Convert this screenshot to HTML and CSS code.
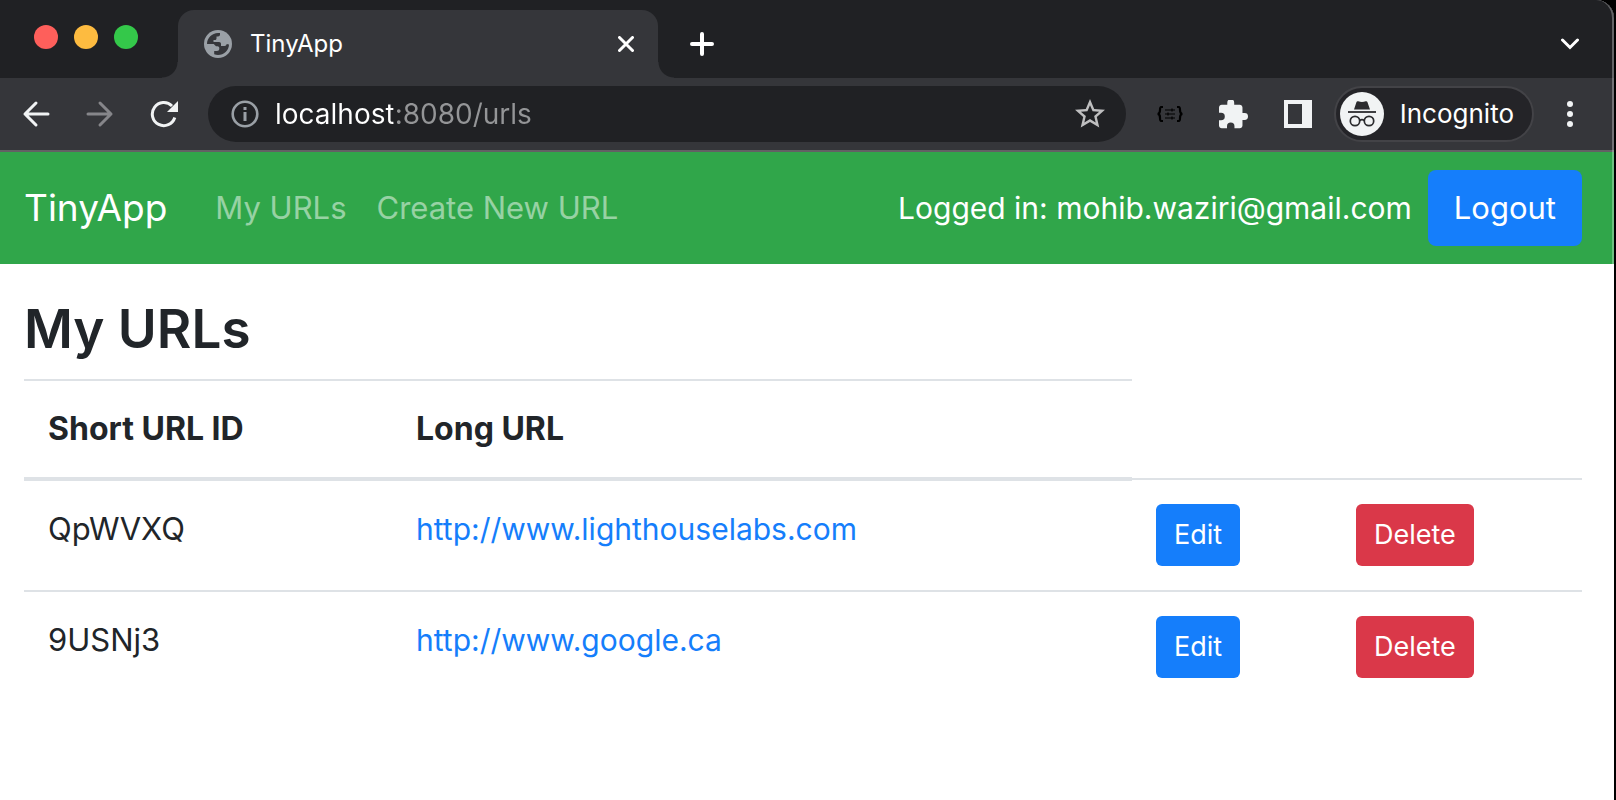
FILE: index.html
```html
<!DOCTYPE html>
<html lang="en">
<head>
<meta charset="utf-8">
<title>TinyApp</title>
<link rel="stylesheet" href="styles.css">
</head>
<body>
<div class="window">
  <header class="chrome">
    <div class="tabstrip">
      <div class="lights">
        <button class="light light-close" aria-label="Close window"></button>
        <button class="light light-min" aria-label="Minimize window"></button>
        <button class="light light-max" aria-label="Maximize window"></button>
      </div>
      <div class="tab">
        <svg class="globe" width="28" height="28" viewBox="0 0 28 28" aria-hidden="true"><circle cx="14" cy="14" r="14" fill="#9aa0a6"/><path fill="#35363a" d="M3 14C3 8 8 3 14 3h2v1.500c0 1.200-.800 2-2 2h-1.500v2c0 .900-.600 1.500-1.500 1.500H9.500v2H15c1.300 0 2 .700 2 2v2h3.500c1.300 0 2-1 2.200-2l2.300.500C24.800 20.500 20 25 14 25c-1.300 0-2.500-.200-3.800-.700V21H13c1.300 0 2.300-1 2.300-2.300v-.700c0-1-.800-1.700-1.800-1.700H12L9.700 14z"/></svg>
        <span class="tab-title">TinyApp</span>
        <button class="icon-btn" aria-label="Close tab"><svg width="16" height="16" viewBox="0 0 16 16"><path d="M1.500 1.500l13 13M14.500 1.500l-13 13" stroke="#fff" stroke-width="3" stroke-linecap="round"/></svg></button>
      </div>
      <button class="icon-btn new-tab" aria-label="New tab"><svg width="24" height="24" viewBox="0 0 24 24"><path d="M12 2v20M2 12h20" stroke="#fff" stroke-width="4" stroke-linecap="round"/></svg></button>
      <button class="icon-btn tab-search" aria-label="Search tabs"><svg width="20" height="12" viewBox="0 0 20 12"><path d="M2.500 2L10 9.500 17.500 2" fill="none" stroke="#fff" stroke-width="3" stroke-linecap="round"/></svg></button>
    </div>
    <div class="toolbar">
      <div class="nav-buttons">
        <button class="icon-btn" aria-label="Back"><svg width="28" height="28" viewBox="0 0 28 28"><path d="M14 3L3 14l11 11M3 14h23" fill="none" stroke="#f1f3f4" stroke-width="3" stroke-linecap="round" stroke-linejoin="round"/></svg></button>
        <button class="icon-btn" aria-label="Forward"><svg width="28" height="28" viewBox="0 0 28 28"><path d="M14 3l11 11-11 11M25 14H2" fill="none" stroke="#86868a" stroke-width="3" stroke-linecap="round" stroke-linejoin="round"/></svg></button>
        <button class="icon-btn" aria-label="Reload"><svg width="28" height="28" viewBox="0 0 28 28"><path d="M24.800 17.500A11.500 11.500 0 1 1 22 6" fill="none" stroke="#f1f3f4" stroke-width="3"/><path d="M28 1v11H17z" fill="#f1f3f4"/></svg></button>
      </div>
      <div class="omnibox">
        <svg class="info" width="28" height="28" viewBox="0 0 28 28" aria-hidden="true"><circle cx="14" cy="14" r="12.300" fill="none" stroke="#9aa0a6" stroke-width="2.600"/><path d="M12.500 12h3v9h-3zM12.500 7h3v3h-3z" fill="#9aa0a6"/></svg>
        <input class="address" type="text" aria-label="Address" value="localhost:8080/urls">
        <button class="icon-btn" aria-label="Bookmark this page"><svg width="30" height="30" viewBox="2 2 20 20"><path fill="#bfbfc0" d="M22 9.240l-7.190-.620L12 2 9.190 8.630 2 9.240l5.460 4.730L5.820 21 12 17.270 18.180 21l-1.630-7.030zM12 15.400l-3.760 2.270 1-4.280-3.320-2.880 4.380-.380L12 6.100l1.710 4.040 4.380.380-3.320 2.880 1 4.280z"/></svg></button>
      </div>
      <div class="extensions">
        <button class="icon-btn" aria-label="JSON viewer"><svg width="26" height="16" viewBox="0 0 26 16"><path d="M6 1H4.500C3 1 3 2 3 4s0 4-2.500 4C3 8 3 10 3 12s0 3 1.500 3H6M20 1h1.500C23 1 23 2 23 4s0 4 2.500 4C23 8 23 10 23 12s0 3-1.500 3H20" fill="none" stroke="#000" stroke-width="2.200"/><path d="M8 4h10M8 8h10M8 12h10M15 2.500v3M11 6.500v3M15 10.500v3" stroke="#000" stroke-width="1.200"/></svg></button>
        <button class="icon-btn" aria-label="Extensions"><svg width="29" height="29" viewBox="2 1.500 21 21"><path fill="#f1f3f4" d="M20.500 11H19V7c0-1.100-.900-2-2-2h-4V3.500a2.500 2.500 0 0 0-5 0V5H4c-1.100 0-1.990.900-1.990 2v3.800H3.500a2.700 2.700 0 0 1 0 5.400H2V20c0 1.100.900 2 2 2h3.800v-1.500a2.700 2.700 0 0 1 5.400 0V22H17c1.100 0 2-.900 2-2v-4h1.500a2.500 2.500 0 0 0 0-5z"/></svg></button>
        <button class="icon-btn" aria-label="Side panel"><svg width="28" height="28" viewBox="0 0 28 28"><path fill="#f1f3f4" fill-rule="evenodd" d="M0 0h28v28H0zM4 4v20h14V4z"/></svg></button>
      </div>
      <button class="profile">
        <svg width="44" height="44" viewBox="0 0 44 44" aria-hidden="true"><circle cx="22" cy="22" r="22" fill="#f1f3f4"/><path fill="#2b2b2e" d="M14 17.500l2.500-7.500c.300-.800 1-1 1.700-.700 2.500 1 5 1 7.500 0 .700-.300 1.500 0 1.700.700l2.600 7.500z"/><path d="M8 20h28" stroke="#2b2b2e" stroke-width="1.800"/><g fill="none" stroke="#2b2b2e" stroke-width="1.700"><circle cx="15" cy="29" r="4.700"/><circle cx="29" cy="29" r="4.700"/><path d="M19.700 28.500c1.500-1 3.100-1 4.600 0"/></g></svg>
        <span>Incognito</span>
      </button>
      <button class="icon-btn" aria-label="Menu"><svg width="6" height="26" viewBox="0 0 6 26"><g fill="#f1f3f4"><circle cx="3" cy="3" r="3"/><circle cx="3" cy="13" r="3"/><circle cx="3" cy="23" r="3"/></g></svg></button>
    </div>
  </header>

  <nav class="navbar">
    <a class="brand" href="#">TinyApp</a>
    <a class="nav-link" href="#">My URLs</a>
    <a class="nav-link" href="#">Create New URL</a>
    <span class="user">Logged in: mohib.waziri@gmail.com</span>
    <button class="btn btn-large btn-primary">Logout</button>
  </nav>

  <main class="content">
    <h1 class="title">My URLs</h1>
    <table class="urls">
      <colgroup><col class="col-id"><col><col class="col-edit"><col class="col-delete"></colgroup>
      <thead>
        <tr><th scope="col">Short URL ID</th><th scope="col">Long URL</th></tr>
      </thead>
      <tbody>
        <tr>
          <td class="short-id">QpWVXQ</td>
          <td><a href="#">http://www.lighthouselabs.com</a></td>
          <td><button class="btn btn-primary">Edit</button></td>
          <td><button class="btn btn-danger">Delete</button></td>
        </tr>
        <tr>
          <td class="short-id">9USNj3</td>
          <td><a href="#">http://www.google.ca</a></td>
          <td><button class="btn btn-primary">Edit</button></td>
          <td><button class="btn btn-danger">Delete</button></td>
        </tr>
      </tbody>
    </table>
  </main>
</div>
</body>
</html>
```
FILE: styles.css
```css
* {
  box-sizing: border-box;
}

body {
  margin: 0;
  background: #000;
  color: #212529;
  font-family: Inter, "Liberation Sans", sans-serif;
  font-size: 30px;
  line-height: 48px;
}

button {
  margin: 0;
  padding: 0;
  border: 0;
  background: none;
  color: #fff;
  font: inherit;
}

svg {
  display: block;
  flex: none;
}

a {
  color: #157efb;
  text-decoration: none;
}

.window {
  position: relative;
  min-height: 100vh;
  margin-right: 2px;
  overflow: hidden;
  border-radius: 0 18px 0 0;
  background: #fff;
}

/* Thin highlight along the window edge */
.window::after {
  content: "";
  position: absolute;
  inset: 0;
  border-right: 2px solid rgba(255, 255, 255, 0.3);
  border-radius: 0 18px 0 0;
  pointer-events: none;
}

.chrome {
  border-bottom: 2px solid #626164;
  background: #35363a;
}

.tabstrip {
  display: flex;
  align-items: center;
  height: 78px;
  padding: 10px 34px 0 0;
  background: #202124;
}

.lights {
  display: flex;
  gap: 16px;
  width: 178px;
  padding: 0 0 14px 34px;
}

.light {
  width: 24px;
  height: 24px;
  border-radius: 50%;
}

.light-close { background: #fe5f5b; }
.light-min { background: #fdbb40; }
.light-max { background: #34c84a; }

.tab {
  position: relative;
  display: flex;
  align-items: center;
  gap: 18px;
  width: 480px;
  height: 68px;
  padding: 0 24px 0 26px;
  border-radius: 16px 16px 0 0;
  background: #35363a;
}

.tab::before,
.tab::after {
  content: "";
  position: absolute;
  bottom: 0;
  width: 16px;
  height: 16px;
}

.tab::before {
  right: 100%;
  background: radial-gradient(circle at 0 0, #202124 15px, #35363a 16px);
}

.tab::after {
  left: 100%;
  background: radial-gradient(circle at 100% 0, #202124 15px, #35363a 16px);
}

.tab-title {
  flex: 1;
  color: #fff;
  font-size: 24px;
}

.icon-btn {
  display: flex;
  align-items: center;
  justify-content: center;
  flex: none;
}

.new-tab {
  margin-left: 32px;
}

.tab-search {
  margin-left: auto;
}

.toolbar {
  display: flex;
  align-items: center;
  height: 72px;
  padding: 0 41px 0 22px;
}

.nav-buttons {
  display: flex;
  gap: 36px;
  margin-right: 30px;
}

.omnibox {
  display: flex;
  align-items: center;
  flex: 1;
  height: 56px;
  padding: 0 21px 0 23px;
  border-radius: 28px;
  background: #202124;
}

/* Host is bright, port and path are muted */
.address {
  flex: 1;
  min-width: 0;
  margin-left: 16px;
  padding: 0;
  border: 0;
  outline: 0;
  background: linear-gradient(to right, #fff 118px, #949597 118px);
  background-clip: text;
  color: transparent;
  font: inherit;
  font-size: 28px;
}

.extensions {
  display: flex;
  align-items: center;
  gap: 36px;
  margin: 0 22px 0 31px;
}

.profile {
  display: flex;
  align-items: center;
  gap: 16px;
  height: 56px;
  margin-right: 33px;
  padding: 0 18px 0 4px;
  border: 2px solid #434347;
  border-radius: 28px;
  background: #242428;
  font-size: 26px;
}

.navbar {
  display: flex;
  align-items: center;
  padding: 18px 32px 18px 24px;
  background: #30a64a;
  color: #fff;
}

.brand {
  margin-right: 48px;
  color: #fff;
  font-size: 37px;
}

.nav-link {
  margin-right: 30px;
  color: rgba(255, 255, 255, 0.5);
}

.nav-link,
.short-id {
  font-size: 31px;
}

.user {
  margin: 0 16px 0 auto;
}

.content {
  padding: 32px 32px 32px 24px;
}

.title {
  margin: 0 0 16px;
  font-size: 53px;
  font-weight: 600;
  line-height: 67px;
}

.urls {
  width: 100%;
  table-layout: fixed;
  border-collapse: collapse;
}

.col-id { width: 368px; }
.col-edit { width: 200px; }
.col-delete { width: 250px; }

.urls th,
.urls td {
  padding: 24px;
  border-top: 2px solid #dee2e6;
  text-align: left;
  vertical-align: top;
}

.urls th {
  border-bottom: 4px solid #dee2e6;
  font-size: 32px;
  font-weight: 700;
}

.btn {
  display: block;
  padding: 10px 18px;
  border-radius: 6px;
  font-size: 27px;
  line-height: 42px;
}

.btn-primary { background: #157efb; }
.btn-danger { background: #da3849; }

.btn-large {
  padding: 14px 26px;
  border-radius: 8px;
  font-size: 31px;
  line-height: 48px;
}
```
